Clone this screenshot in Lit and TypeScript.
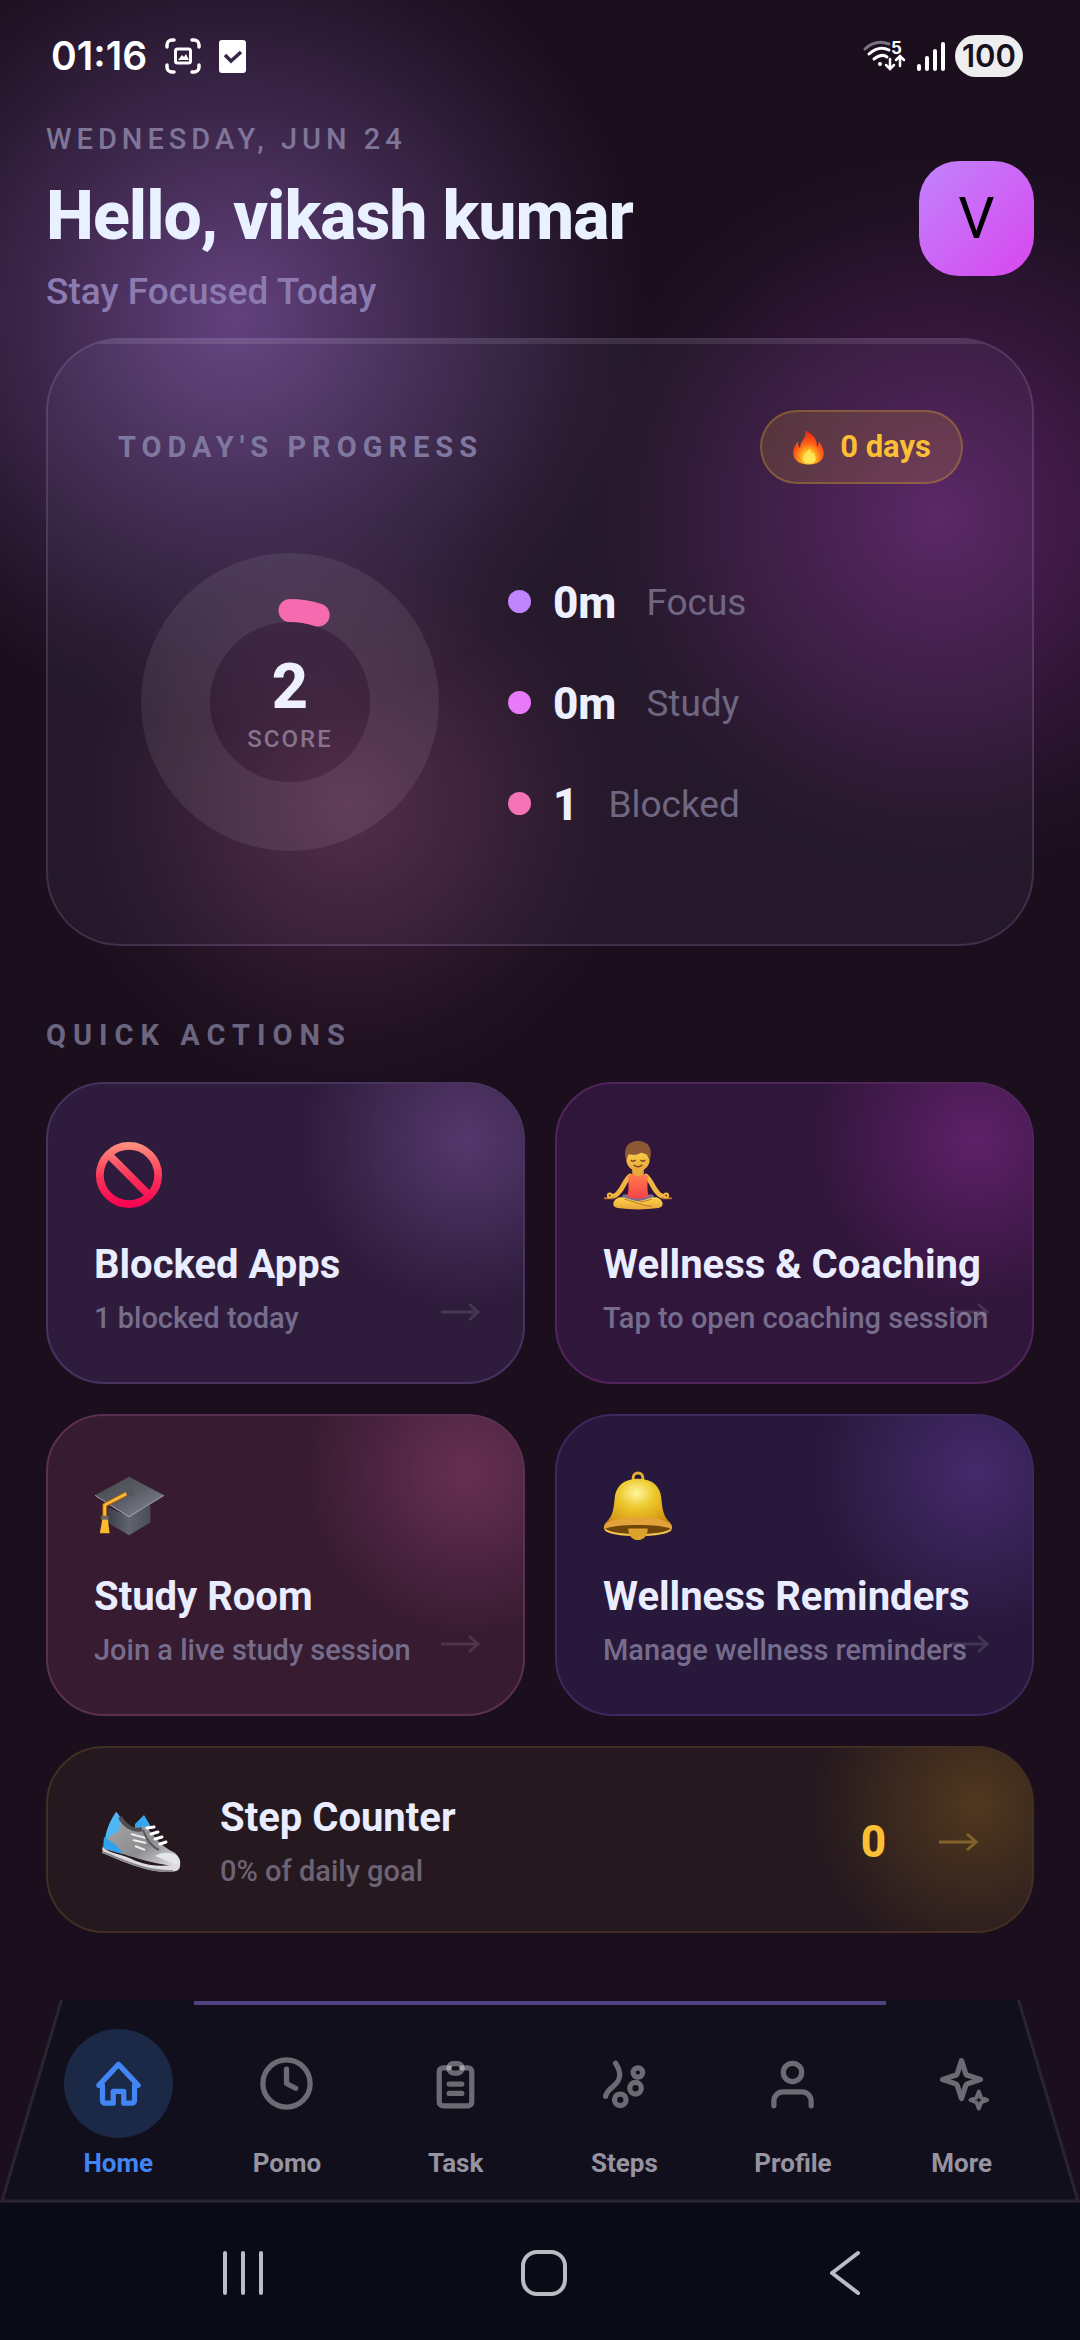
import { LitElement, html, css, svg } from 'lit';
import { customElement, property } from 'lit/decorators.js';
import { classMap } from 'lit/directives/class-map.js';

const emojis: Record<string, unknown> = {
    blocked: svg`
        <defs>
            <linearGradient id="red" gradientUnits="userSpaceOnUse" x1="0" y1="2" x2="0" y2="70">
                <stop offset="0" stop-color="#ff9480" />
                <stop offset=".55" stop-color="#fb3059" />
                <stop offset="1" stop-color="#f80052" />
            </linearGradient>
        </defs>
        <g fill="none" stroke="url(#red)" stroke-width="8">
            <circle cx="36" cy="36" r="30" />
            <path d="M15 15l42 42" />
        </g>`,
    yoga: svg`
        <defs>
            <linearGradient id="shirt" x1="0" y1="0" x2="0" y2="1">
                <stop offset="0" stop-color="#ff8a4a" />
                <stop offset="1" stop-color="#f6414a" />
            </linearGradient>
            <linearGradient id="skin" x1="0" y1="0" x2="0" y2="1">
                <stop offset="0" stop-color="#fdd549" />
                <stop offset="1" stop-color="#e9a43a" />
            </linearGradient>
        </defs>
        <path d="M28 37c-6 5-7 12-12 17-2 3-5 4-8 4M44 37c6 5 7 12 12 17 2 3 5 4 8 4" fill="none" stroke="#f0b540" stroke-width="5" stroke-linecap="round" />
        <path d="M2 60h9M61 60h9" stroke="#b9762b" stroke-width="2" stroke-linecap="round" />
        <circle cx="7" cy="57" r="2" fill="#5b3013" stroke="#f3bd44" stroke-width="2" />
        <circle cx="65" cy="57" r="2" fill="#5b3013" stroke="#f3bd44" stroke-width="2" />
        <path d="M21 56h30l5 7H16z" fill="#77708f" />
        <path d="M17 59c-7 2-9 10-2 11 14 2 28 2 42 0 7-1 5-9-2-11-7 0-15 4-19 4s-12-4-19-4z" fill="url(#skin)" />
        <path d="M22 61c8 1 17 7 28 7M38 64l12-3" fill="none" stroke="#b8772c" stroke-width="1" />
        <path d="M32 30h8v4l6 3c0 8-1 14 1 21-7 3-15 3-22 0 2-7 1-13 1-21l6-3z" fill="url(#shirt)" />
        <path d="M30 29h12v5c-2 4-10 4-12 0z" fill="#e6a93a" />
        <ellipse cx="36" cy="20" rx="12" ry="12" fill="url(#skin)" />
        <path d="M24 21C20 8 26 1 36 1s16 7 12 20l-3-6c-3-1-4-2-6-2-4 3-9 2-13 2z" fill="#8d5836" />
        <path d="M29 21q2 1.500 4 0M39 21q2 1.500 4 0M32 26q4 3 8 0" fill="none" stroke="#74431c" stroke-width="1.400" stroke-linecap="round" />`,
    study: svg`
        <defs>
            <linearGradient id="board" x1="0" y1="0" x2="1" y2="1">
                <stop offset="0" stop-color="#43454c" />
                <stop offset=".5" stop-color="#5c5e67" />
                <stop offset=".8" stop-color="#777985" />
                <stop offset="1" stop-color="#484a52" />
            </linearGradient>
            <linearGradient id="cap" x1="0" y1="0" x2="1" y2="0">
                <stop offset="0" stop-color="#3c3e46" />
                <stop offset=".5" stop-color="#60646e" />
                <stop offset="1" stop-color="#4a4c55" />
            </linearGradient>
        </defs>
        <path d="M14 36v16l22 13 22-13V34L36 46z" fill="url(#cap)" />
        <path d="M1 24L36 5l36 19-36 23z" fill="url(#board)" />
        <path d="M1 24l35 22 36-22" fill="none" stroke="#a1a3aa" stroke-width="1" />
        <path d="M36 21L11 34v14" fill="none" stroke="#9b5b05" stroke-width="5" stroke-linejoin="round" />
        <path d="M36 21L11 34v14" fill="none" stroke="#fdb53c" stroke-width="3" stroke-linejoin="round" />
        <path d="M9 46h5l2 17H6z" fill="#fdb92d" />
        <path d="M7 45h8v4H7z" fill="#6c655f" />
        <circle cx="37" cy="21" r="4" fill="#55575d" />`,
    bell: svg`
        <defs>
            <radialGradient id="gold" cx=".48" cy=".25" r=".75">
                <stop offset="0" stop-color="#fff6a0" />
                <stop offset=".35" stop-color="#ecc82c" />
                <stop offset=".75" stop-color="#d99a14" />
                <stop offset="1" stop-color="#b1671d" />
            </radialGradient>
        </defs>
        <circle cx="36" cy="6" r="5" fill="none" stroke="#e5ae33" stroke-width="3" />
        <path d="M36 7c15 0 23 8 24 20 1 11 2 18 8 24 4 4 4 7 1 9-14 7-52 7-66 0-3-2-3-5 1-9 6-6 7-13 8-24C13 15 21 7 36 7z" fill="url(#gold)" />
        <ellipse cx="36" cy="58" rx="33" ry="6" fill="#6f4508" />
        <path d="M1 59c-1-6 5-12 35-12s36 6 35 12c-9-6-61-6-70 0z" fill="#e2a43a" />
        <path d="M2 59c8 8 60 8 68 0" fill="none" stroke="#f1c24c" stroke-width="2" />
        <path d="M26 58h20c0 7-4 12-10 12s-10-5-10-12z" fill="#dda22e" />`,
    shoe: svg`
        <defs>
            <linearGradient id="shoe" x1="0" y1="0" x2="1" y2="1">
                <stop offset="0" stop-color="#aaa9aa" />
                <stop offset=".6" stop-color="#8d8d90" />
                <stop offset="1" stop-color="#e3e4e8" />
            </linearGradient>
        </defs>
        <path d="M37 14l9-9 6 10-2 11-13-5z" fill="#35a7f1" />
        <path d="M8 32L18 2c4 3 4 8 9 13 7 4 15 3 20 1 8 7 14 20 30 27 4 4 6 7 5 12C64 58 28 44 6 39z" fill="url(#shoe)" />
        <path d="M7 32c0-9 4-20 11-30 5 4 5 9 4 17-4 5-11 6-15 13z" fill="#4eb8f7" />
        <path d="M6 27c6 4 13 7 19 17L5 38z" fill="#2da2ee" />
        <path d="M22 7c4 8 13 15 22 12" fill="none" stroke="#504d50" stroke-width="4" />
        <path d="M33 24l15 4M35 30l13 3M37 36l10 4" stroke="#ecebed" stroke-width="2" />
        <path d="M49 18l7-1M53 24l7-2M57 29l7-2M62 34l6-2" stroke="#fff" stroke-width="3" stroke-linecap="round" />
        <path d="M45 20c4 11 9 17 16 20" fill="none" stroke="#56545a" stroke-width="2" />
        <path d="M57 46c7-4 13-4 21-1 4 5 5 8 3 11z" fill="#e4e5ea" />
        <path d="M4 37c8 7 19 6 34 14 17 6 31 6 44 2 1 7-3 9-12 9C48 62 23 51 5 43z" fill="#dedce0" />
        <path d="M4 42c22 8 43 20 71 19" fill="none" stroke="#88868c" stroke-width="2" />`,
    flame: svg`
        <defs>
            <radialGradient id="fire" cx=".5" cy=".8" r=".75">
                <stop offset="0" stop-color="#fff56a" />
                <stop offset=".3" stop-color="#ffb21f" />
                <stop offset=".6" stop-color="#fb5b18" />
                <stop offset="1" stop-color="#ec2b13" />
            </radialGradient>
        </defs>
        <path d="M27 0c19 7 26 19 26 35 3-2 4-6 3-12 9 10 14 23 10 33-4 11-16 16-30 16S8 67 4 56c-4-11 1-23 9-33-1 7 1 12 4 14 0-16 17-22 10-37z" fill="url(#fire)" />
        <path d="M36 38c-1 8-13 11-13 21 0 8 6 11 14 11s14-4 13-12c-1-6-3-8-4-12-3 3-4 4-5 4 1-5-1-9-5-12z" fill="#ffe657" />`,
};

const actions = [
    { icon: 'blocked', tone: 'violet', title: 'Blocked Apps', text: '1 blocked today' },
    { icon: 'yoga', tone: 'fuchsia', title: 'Wellness & Coaching', text: 'Tap to open coaching session' },
    { icon: 'study', tone: 'pink', title: 'Study Room', text: 'Join a live study session' },
    { icon: 'bell', tone: 'indigo', title: 'Wellness Reminders', text: 'Manage wellness reminders' },
];

const stats = [
    { tone: 'focus', value: '0m', label: 'Focus' },
    { tone: 'study', value: '0m', label: 'Study' },
    { tone: 'block', value: '1', label: 'Blocked' },
];

const tabs = [
    {
        label: 'Home',
        icon: svg`<path d="M5.900 12.700H4.500L12 4.700l7.500 8h-1.400M5.900 12.700v5.800a1 1 0 0 0 1 1H10v-4.500h4v4.500h3.100a1 1 0 0 0 1-1v-5.800" />`,
    },
    { label: 'Pomo', icon: svg`<circle cx="12" cy="12" r="9" /><path d="M12 6.500V12l3.500 1.800" />` },
    {
        label: 'Task',
        icon: svg`
            <path d="M9.500 6H7.300a1.500 1.500 0 0 0-1.500 1.500V19a1.500 1.500 0 0 0 1.500 1.500h9.400a1.500 1.500 0 0 0 1.500-1.500V7.500A1.500 1.500 0 0 0 16.700 6h-2.200" />
            <rect x="9.500" y="4.400" width="5" height="3.600" rx="1.700" />
            <path d="M9.600 12.200h4.800M9.600 15.800h4.800" />`,
    },
    {
        label: 'Steps',
        icon: svg`
            <path d="M8.600 4.300c2.400 3.700 2 6.300-.700 8.600-1.900 1.500-2.800 2.500-3.100 4" />
            <circle cx="17.100" cy="7.800" r="1.800" />
            <circle cx="16.200" cy="13.800" r="2.200" />
            <circle cx="10.400" cy="18.200" r="2.200" />`,
    },
    {
        label: 'Profile',
        icon: svg`<circle cx="12" cy="7.800" r="3.500" /><path d="M4.900 20.500v-1.800a3.500 3.500 0 0 1 3.500-3.500h7.200a3.500 3.500 0 0 1 3.500 3.500v1.800" />`,
    },
    {
        label: 'More',
        icon: svg`
            <path d="M12 3.300l1.600 4.900a1 1 0 0 0 .700.700l4.900 1.600-4.900 1.600a1 1 0 0 0-.700.700L12 17.700l-1.600-4.900a1 1 0 0 0-.700-.700l-4.900-1.600 4.900-1.600a1 1 0 0 0 .700-.700z" />
            <path stroke-width="1.500" d="M18.600 15.100l.900 2.300 2.300.900-2.300.900-.900 2.300-.900-2.300-2.300-.900 2.300-.900z" />`,
    },
];

const arrow = html`
    <svg class="arrow" viewBox="0 0 40 20" aria-hidden="true">
        <path d="M1 10h36M29 2l9 8-9 8" />
    </svg>`;

@customElement('emoji-icon')
class EmojiIcon extends LitElement {
    static styles = css`
        :host {
            display: block;
        }
        svg {
            display: block;
            width: 100%;
            height: 100%;
            overflow: visible;
        }
    `;

    @property() name = '';
    @property() box = '0 0 72 72';

    render() {
        return html`<svg viewBox=${this.box} aria-hidden="true">${emojis[this.name]}</svg>`;
    }
}

@customElement('status-bar')
class StatusBar extends LitElement {
    static styles = css`
        :host {
            display: flex;
            align-items: center;
            justify-content: space-between;
            height: 112px;
            padding: 0 57px 0 51px;
            box-sizing: border-box;
            color: #fff;
            font-family: Inter, Roboto, sans-serif;
        }
        .group {
            display: flex;
            align-items: center;
            gap: 18px;
        }
        .right {
            gap: 10px;
        }
        .time {
            font-size: 39px;
            font-weight: 600;
            line-height: 48px;
        }
        .shot {
            width: 36px;
            height: 36px;
        }
        .check {
            width: 27px;
            height: 33px;
        }
        .wifi {
            width: 44px;
            height: 32px;
            overflow: visible;
        }
        .signal {
            width: 28px;
            height: 30px;
        }
        .battery {
            width: 68px;
            border-radius: 21px;
            background: #eee;
            color: #17101d;
            font-size: 31px;
            font-weight: 600;
            line-height: 42px;
            text-align: center;
        }
    `;

    render() {
        return html`
            <div class="group">
                <span class="time">01:16</span>
                <svg class="shot" viewBox="0 0 36 36" fill="none" stroke="#fff" stroke-width="3.500" stroke-linecap="round">
                    <path d="M2 9V7a5 5 0 0 1 5-5h2M27 2h2a5 5 0 0 1 5 5v2M34 27v2a5 5 0 0 1-5 5h-2M9 34H7a5 5 0 0 1-5-5v-2" />
                    <rect x="10.500" y="11" width="15" height="14" rx="2" stroke-width="3" />
                    <path d="M13 22l4-5 2 2 2-3 3 6z" fill="#fff" stroke="none" />
                </svg>
                <svg class="check" viewBox="0 0 27 33">
                    <rect width="27" height="33" rx="3" fill="#fff" />
                    <path d="M6 15l6 6 10-9" fill="none" stroke="#3a2648" stroke-width="3.500" />
                </svg>
            </div>
            <div class="group right">
                <svg class="wifi" viewBox="0 0 44 32" fill="none" stroke="#fff" stroke-width="3" stroke-linecap="round">
                    <path d="M2 9Q13-1 26 4" stroke="#7b7380" />
                    <path d="M6 14q10-9 20-4M11 19q8-6 13-2" />
                    <circle cx="17" cy="24" r="2" fill="#fff" stroke="none" />
                    <path d="M27 19v9M23 25l4 4 4-4M37 26v-9M33 20l4-4 4 4" stroke-width="2.500" />
                    <text x="28" y="14" fill="#fff" stroke="none" font-size="17" font-weight="700">5</text>
                </svg>
                <svg class="signal" viewBox="0 0 28 30" stroke="#fff" stroke-width="4" stroke-linecap="round">
                    <path d="M2 25v3M10 17v11M18 10v18M26 3v25" />
                </svg>
                <span class="battery">100</span>
            </div>
        `;
    }
}

@customElement('progress-card')
class ProgressCard extends LitElement {
    static styles = css`
        :host {
            display: block;
            position: relative;
            overflow: hidden;
            padding: 70px 69px 70px 70px;
            border: 2px solid rgba(220, 190, 255, 0.15);
            border-radius: 74px;
            background: rgba(200, 190, 255, 0.055);
        }
        :host::before {
            content: '';
            position: absolute;
            top: 0;
            left: 0;
            right: 0;
            height: 4px;
            background: rgba(255, 255, 255, 0.1);
        }
        .head {
            display: flex;
            align-items: center;
            justify-content: space-between;
        }
        h2 {
            margin: 0;
            color: #7f779f;
            font-size: 29px;
            font-weight: 700;
            line-height: 34px;
            letter-spacing: 6px;
        }
        .badge {
            display: flex;
            align-items: center;
            gap: 14px;
            padding: 0 30px;
            border: 2px solid rgba(251, 191, 36, 0.25);
            border-radius: 37px;
            background: rgba(251, 191, 36, 0.15);
            color: #fbbf36;
            font-size: 31px;
            font-weight: 700;
            line-height: 70px;
        }
        .flame {
            width: 34px;
            height: 37px;
        }
        .body {
            display: flex;
            align-items: center;
            gap: 46px;
            margin-top: 46px;
        }
        .ring {
            display: grid;
            place-items: center;
            width: 344px;
            height: 344px;
        }
        .ring > * {
            grid-area: 1 / 1;
        }
        .ring svg {
            width: 100%;
            height: 100%;
        }
        .score {
            display: flex;
            flex-direction: column;
            align-items: center;
        }
        .score strong {
            color: #edf1ff;
            font-size: 63px;
            font-weight: 800;
            line-height: 74px;
        }
        .score span {
            color: #85738f;
            font-size: 24px;
            font-weight: 500;
            line-height: 30px;
            letter-spacing: 2px;
        }
        ul {
            display: flex;
            flex-direction: column;
            gap: 47px;
            margin: 4px 0 0;
            padding: 0;
            list-style: none;
        }
        li {
            display: flex;
            align-items: center;
            gap: 22px;
            line-height: 54px;
        }
        .dot {
            width: 23px;
            height: 23px;
            margin-bottom: 4px;
            border-radius: 50%;
        }
        .focus {
            background: #c084fc;
        }
        .study {
            background: #e879f9;
        }
        .block {
            background: #f472b6;
        }
        .value {
            color: #edf1ff;
            font-size: 44px;
            font-weight: 800;
        }
        .label {
            margin-left: 8px;
            color: #6f6782;
            font-size: 37px;
        }
    `;

    render() {
        return html`
            <div class="head">
                <h2>TODAY'S PROGRESS</h2>
                <span class="badge"><emoji-icon class="flame" name="flame"></emoji-icon>0 days</span>
            </div>
            <div class="body">
                <div class="ring">
                    <svg viewBox="0 0 344 344" fill="none" aria-hidden="true">
                        <circle cx="172" cy="172" r="114.500" stroke="#fff" stroke-opacity=".08" stroke-width="69" />
                        <circle cx="172" cy="172" r="91.500" stroke="#f66bb0" stroke-width="23" stroke-linecap="round"
                            pathLength="100" stroke-dasharray="5 95" transform="rotate(-90 172 172)" />
                    </svg>
                    <div class="score">
                        <strong>2</strong>
                        <span>SCORE</span>
                    </div>
                </div>
                <ul>
                    ${stats.map((s) => html`
                        <li>
                            <span class="dot ${s.tone}"></span>
                            <span class="value">${s.value}</span>
                            <span class="label">${s.label}</span>
                        </li>
                    `)}
                </ul>
            </div>
        `;
    }
}

@customElement('quick-actions')
class QuickActions extends LitElement {
    static styles = css`
        :host {
            display: block;
        }
        h2 {
            margin: 0 0 30px;
            color: #6b6580;
            font-size: 29px;
            font-weight: 700;
            line-height: 34px;
            letter-spacing: 7px;
        }
        .grid {
            display: grid;
            grid-template-columns: 1fr 1fr;
            gap: 30px;
        }
        .card {
            position: relative;
            min-width: 0;
            padding: 46px;
            border: 2px solid var(--edge);
            border-radius: 58px;
            background: radial-gradient(circle 164px at calc(100% - 58px) 58px, var(--glow), var(--fill)) border-box;
            color: inherit;
            text-decoration: none;
            white-space: nowrap;
        }
        .violet {
            --fill: #2f1c3c;
            --glow: #54386d;
            --edge: #473260;
        }
        .fuchsia {
            --fill: #31163b;
            --glow: #5e2068;
            --edge: #52245c;
        }
        .pink {
            --fill: #371b31;
            --glow: #672f53;
            --edge: #5c3050;
        }
        .indigo {
            --fill: #28183b;
            --glow: #442a6b;
            --edge: #3c295d;
        }
        .amber {
            --fill: #25181f;
            --glow: #50381e;
            --edge: #432f22;
        }
        .icon {
            width: 70px;
            height: 70px;
            margin: 10px 0 31px;
        }
        h3 {
            margin: 0 0 11px;
            color: #e9edff;
            font-size: 40px;
            font-weight: 700;
            line-height: 48px;
        }
        p {
            margin: 0;
            color: #756d8b;
            font-size: 29px;
            font-weight: 500;
            line-height: 36px;
        }
        .arrow {
            width: 40px;
            height: 20px;
            fill: none;
            stroke: rgba(255, 255, 255, 0.12);
            stroke-width: 3;
        }
        .tile .arrow {
            position: absolute;
            right: 43px;
            bottom: 60px;
        }
        .wide {
            grid-column: 1 / -1;
            display: flex;
            align-items: center;
            padding: 46px 54px 42px 46px;
        }
        .wide .arrow {
            stroke: #84622b;
        }
        .shoe {
            width: 92px;
            height: 64px;
            margin-right: 34px;
        }
        .info {
            flex: 1;
        }
        .wide p {
            color: #6c6474;
        }
        .count {
            margin-right: 52px;
            color: #fbbf36;
            font-size: 44px;
            font-weight: 800;
            line-height: 54px;
        }
    `;

    render() {
        return html`
            <h2>QUICK ACTIONS</h2>
            <div class="grid">
                ${actions.map((a) => html`
                    <a class="card tile ${a.tone}" href="#">
                        <emoji-icon class="icon" name=${a.icon}></emoji-icon>
                        <h3>${a.title}</h3>
                        <p>${a.text}</p>
                        ${arrow}
                    </a>
                `)}
                <a class="card wide amber" href="#">
                    <emoji-icon class="shoe" name="shoe" box="-4 0 92 64"></emoji-icon>
                    <div class="info">
                        <h3>Step Counter</h3>
                        <p>0% of daily goal</p>
                    </div>
                    <span class="count">0</span>
                    ${arrow}
                </a>
            </div>
        `;
    }
}

@customElement('tab-bar')
class TabBar extends LitElement {
    static styles = css`
        :host {
            display: block;
            position: relative;
            padding: 29px 34px 25px;
        }
        .shape {
            position: absolute;
            inset: 0;
            width: 100%;
            height: 100%;
        }
        .shape path {
            fill: #120f1c;
            stroke: #292530;
            stroke-width: 3;
            vector-effect: non-scaling-stroke;
        }
        .line {
            position: absolute;
            top: 1px;
            left: 18%;
            right: 18%;
            height: 4px;
            background: #54417f;
        }
        nav {
            position: relative;
            display: grid;
            grid-template-columns: repeat(6, 1fr);
        }
        a {
            display: flex;
            flex-direction: column;
            align-items: center;
            gap: 10px;
            color: #9793a0;
            font-size: 26px;
            font-weight: 700;
            line-height: 30px;
            text-decoration: none;
        }
        .bubble {
            display: grid;
            place-items: center;
            width: 109px;
            height: 109px;
            border-radius: 50%;
        }
        .bubble svg {
            width: 63px;
            height: 63px;
            fill: none;
            stroke: rgba(255, 255, 255, 0.38);
            stroke-width: 2;
            stroke-linecap: round;
            stroke-linejoin: round;
        }
        .active {
            color: #4285f4;
        }
        .active .bubble {
            background: #1b2947;
        }
        .active svg {
            stroke: #4285f4;
        }
    `;

    @property() active = 'Home';

    render() {
        return html`
            <svg class="shape" viewBox="0 0 1080 203" preserveAspectRatio="none" aria-hidden="true">
                <path d="M62 -2L2 201H1078L1018 -2z" />
            </svg>
            <div class="line"></div>
            <nav>
                ${tabs.map((t) => html`
                    <a href="#" class=${classMap({ active: t.label === this.active })}>
                        <span class="bubble"><svg viewBox="0 0 24 24" aria-hidden="true">${t.icon}</svg></span>
                        ${t.label}
                    </a>
                `)}
            </nav>
        `;
    }
}

@customElement('system-bar')
class SystemBar extends LitElement {
    static styles = css`
        :host {
            display: grid;
            grid-template-columns: repeat(3, 1fr);
            padding: 46px 84px 43px 92px;
            background: #0a0b17;
        }
        button {
            display: grid;
            place-items: center;
            padding: 0;
            border: none;
            background: none;
        }
        svg {
            width: 48px;
            height: 48px;
            fill: none;
            stroke: #bcbdc4;
            stroke-width: 4;
            stroke-linecap: round;
            stroke-linejoin: round;
        }
    `;

    render() {
        return html`
            <button aria-label="Recents"><svg viewBox="0 0 48 48"><path d="M6 4v40M24 4v40M42 4v40" /></svg></button>
            <button aria-label="Home"><svg viewBox="0 0 48 48"><rect x="3" y="3" width="42" height="42" rx="14" /></svg></button>
            <button aria-label="Back"><svg viewBox="0 0 48 48"><path d="M37 4L11 24l26 20" /></svg></button>
        `;
    }
}

@customElement('app-root')
class AppRoot extends LitElement {
    static styles = css`
        :host {
            display: flex;
            flex-direction: column;
            min-height: 100vh;
            background:
                radial-gradient(circle 410px at 236px 315px, rgba(192, 132, 252, 0.43), rgba(192, 132, 252, 0.19) 52%, rgba(192, 132, 252, 0.05) 84%, rgba(192, 132, 252, 0)),
                radial-gradient(circle 360px at calc(100% - 141px) 516px, rgba(217, 70, 239, 0.31), rgba(217, 70, 239, 0.14) 50%, rgba(217, 70, 239, 0.03) 84%, rgba(217, 70, 239, 0)),
                radial-gradient(circle 290px at 348px 805px, rgba(244, 114, 182, 0.23), rgba(244, 114, 182, 0.1) 50%, rgba(244, 114, 182, 0.02) 84%, rgba(244, 114, 182, 0)),
                #1b0f1e;
            font-family: Roboto, sans-serif;
        }
        main {
            padding: 10px 46px 40px;
        }
        header {
            display: flex;
            align-items: center;
            justify-content: space-between;
        }
        .date {
            margin: 0;
            color: #7e7598;
            font-size: 29px;
            font-weight: 500;
            line-height: 34px;
            letter-spacing: 5px;
        }
        h1 {
            margin: 20px 0 14px;
            color: #e9f0ff;
            font-size: 68px;
            font-weight: 800;
            line-height: 80px;
            letter-spacing: -1px;
        }
        .tagline {
            margin: 0;
            color: #8b7bb0;
            font-size: 37px;
            font-weight: 500;
            line-height: 44px;
        }
        .avatar {
            width: 115px;
            height: 115px;
            padding: 0;
            border: none;
            border-radius: 40px;
            background: linear-gradient(135deg, #c084fc, #d946ef);
            color: #000;
            font-family: inherit;
            font-size: 57px;
            line-height: 115px;
        }
        progress-card {
            margin: 24px 0 72px;
        }
        tab-bar {
            margin-top: auto;
        }
    `;

    render() {
        return html`
            <status-bar></status-bar>
            <main>
                <header>
                    <div>
                        <p class="date">WEDNESDAY, JUN 24</p>
                        <h1>Hello, vikash kumar</h1>
                        <p class="tagline">Stay Focused Today</p>
                    </div>
                    <button class="avatar">V</button>
                </header>
                <progress-card></progress-card>
                <quick-actions></quick-actions>
            </main>
            <tab-bar></tab-bar>
            <system-bar></system-bar>
        `;
    }
}
